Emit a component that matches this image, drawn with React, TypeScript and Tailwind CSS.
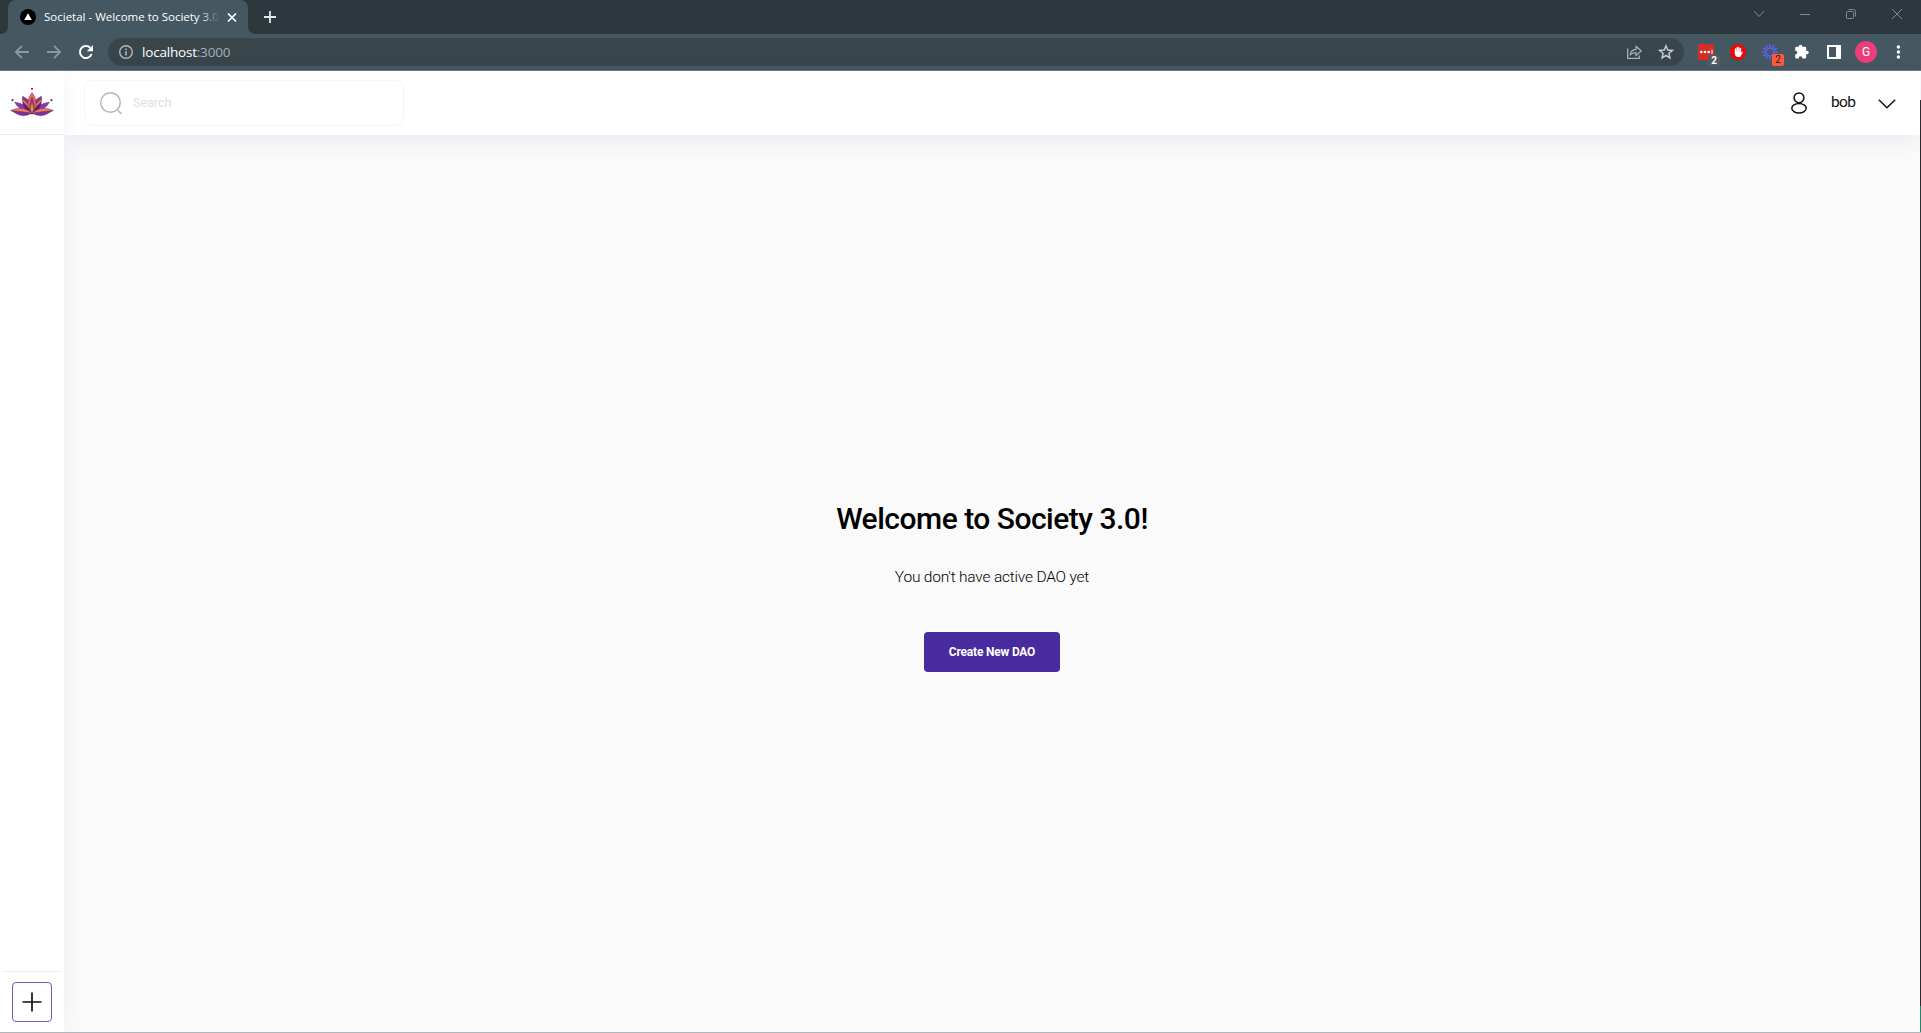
import React from "react";

type IconProps = { children: React.ReactNode; w?: number; h?: number; className?: string };

function Icon({ children, w = 16, h = 16, className = "" }: IconProps) {
  return (
    <svg width={w} height={h} viewBox={`0 0 ${w} ${h}`} fill="none" className={`shrink-0 ${className}`}>
      {children}
    </svg>
  );
}

function Slot({ children }: { children: React.ReactNode }) {
  return <div className="relative flex h-9 w-8 shrink-0 items-center justify-center">{children}</div>;
}

function WindowSlot({ children }: { children: React.ReactNode }) {
  return <div className="flex h-7 w-[46px] shrink-0 items-center justify-center text-[#7d8c92]">{children}</div>;
}

function TabStrip() {
  return (
    <div className="flex h-[34px] shrink-0 items-stretch bg-[#2c383e]">
      <Icon w={8} h={34}>
        <path d="M0 34 Q8 34 8 26 V34Z" fill="#455760" />
      </Icon>
      <div className="flex w-60 items-center rounded-t-lg bg-[#455760] pl-3">
        <Icon>
          <circle cx="8" cy="8" r="8" fill="#000" />
          <path d="M8 4.2 L11.8 11 H4.2Z" fill="#fff" />
        </Icon>
        <div className="relative ml-2 h-[18px] w-[176px] overflow-hidden whitespace-nowrap font-['Open_Sans',sans-serif] text-[11.5px] leading-[18px] text-white">
          Societal - Welcome to Society 3.0
          <div className="absolute inset-y-0 right-0 w-5 bg-linear-to-r from-[#455760]/0 to-[#455760]" />
        </div>
        <Icon className="ml-1">
          <path d="M4 4.5 L12 12.5 M12 4.5 L4 12.5" stroke="#fff" strokeWidth="1.7" />
        </Icon>
      </div>
      <Icon w={8} h={34}>
        <path d="M8 34 Q0 34 0 26 V34Z" fill="#455760" />
      </Icon>
      <Icon w={28} h={34}>
        <path d="M14 11 V23 M8 17 H20" stroke="#e3e7e8" strokeWidth="1.8" />
      </Icon>
      <div className="flex-1" />
      <div className="mr-px flex">
        <WindowSlot>
          <Icon>
            <path d="M3 5 L8 10.5 L13 5" stroke="currentColor" />
          </Icon>
        </WindowSlot>
        <WindowSlot>
          <Icon>
            <path d="M3 8.5 H13" stroke="currentColor" />
          </Icon>
        </WindowSlot>
        <WindowSlot>
          <Icon>
            <rect x="3.5" y="5.5" width="7" height="7" rx="1" stroke="currentColor" />
            <path d="M5.5 3.5 H10.5 Q12.5 3.5 12.5 5.5 V10.5" stroke="currentColor" />
          </Icon>
        </WindowSlot>
        <WindowSlot>
          <Icon>
            <path d="M3 3 L13 13 M13 3 L3 13" stroke="currentColor" />
          </Icon>
        </WindowSlot>
      </div>
    </div>
  );
}

function Toolbar() {
  return (
    <div className="flex h-[37px] shrink-0 items-start border-b border-[#6b7a82] bg-[#455760] pl-1.5 pr-[7px]">
      <Slot>
        <Icon>
          <path d="M15 8 H2 M8 1.8 L1.8 8 L8 14.2" stroke="#8c989e" strokeWidth="1.8" />
        </Icon>
      </Slot>
      <Slot>
        <Icon>
          <path d="M1 8 H14 M8 1.8 L14.2 8 L8 14.2" stroke="#8c989e" strokeWidth="1.8" />
        </Icon>
      </Slot>
      <Slot>
        <Icon>
          <path d="M13.6 10 A6 6 0 1 1 12.2 3.8" stroke="#fff" strokeWidth="2" />
          <path d="M15 1 V7.2 H8.8Z" fill="#fff" />
        </Icon>
      </Slot>
      <div className="ml-1.5 mr-1.5 mt-1 flex h-7 flex-1 items-center rounded-full bg-[#38454b] pl-2.5 pr-0.5">
        <Icon>
          <circle cx="8" cy="8" r="6.3" stroke="#b0b8bc" strokeWidth="1.4" />
          <path d="M8 7.2 V11.5 M8 4.4 V6" stroke="#b0b8bc" strokeWidth="1.6" />
        </Icon>
        <div className="ml-2 flex-1 whitespace-nowrap font-['Open_Sans',sans-serif] text-[13.5px] leading-5 tracking-[-0.2px] text-white">
          localhost<span className="text-[#a5aeb2]">:3000</span>
        </div>
        <Slot>
          <Icon>
            <path d="M1.7 4.5 V14.3 H13.3 V11.5" stroke="#aab2b6" strokeWidth="1.3" />
            <path d="M4.2 11 C4.6 7.4 6.8 5.6 10 5.4 V2.2 L15.2 7 L10 11.6 V8.6 C7.4 8.6 5.6 9.2 4.2 11Z" stroke="#aab2b6" strokeWidth="1.2" strokeLinejoin="round" />
          </Icon>
        </Slot>
        <Slot>
          <Icon>
            <path d="M8 1.8 L9.8 6 L14.3 6.4 L10.9 9.4 L11.9 13.9 L8 11.5 L4.1 13.9 L5.1 9.4 L1.7 6.4 L6.2 6Z" stroke="#c3c9cc" strokeWidth="1.5" />
          </Icon>
        </Slot>
      </div>
      <Slot>
        <Icon>
          <rect width="16" height="16" rx="1.5" fill="#d32d27" />
          <circle cx="3.3" cy="8" r="1.3" fill="#fff" />
          <circle cx="7" cy="8" r="1.3" fill="#fff" />
          <circle cx="10.7" cy="8" r="1.3" fill="#fff" />
          <path d="M14 5.5 V10" stroke="#fff" />
        </Icon>
        <div className="absolute left-[18px] top-[21px] flex h-[11px] w-3 items-center justify-center rounded-xs bg-[#565b5f] font-['Roboto',sans-serif] text-[10px] font-bold leading-none text-white">2</div>
      </Slot>
      <Slot>
        <Icon>
          <path d="M4.8 0 H11.2 L16 4.8 V11.2 L11.2 16 H4.8 L0 11.2 V4.8Z" fill="#e30b0b" />
          <path d="M5.5 9 V5 M7.2 8 V3.4 M8.9 8 V3.4 M10.5 9 V4.8" stroke="#fff" strokeWidth="1.4" strokeLinecap="round" />
          <path d="M4.8 7.5 H10 L11.2 8.8 L12.2 7.6 L12.8 8.5 L10.2 13 H7.2 Q4.8 12 4.8 9Z" fill="#fff" />
        </Icon>
      </Slot>
      <Slot>
        <Icon>
          <path
            d="M8 0 V5 M8 11 V16 M0 8 H5 M11 8 H16 M4 1.1 L6.5 5.4 M9.5 10.6 L12 14.9 M1.1 4 L5.4 6.5 M10.6 9.5 L14.9 12 M1.1 12 L5.4 9.5 M10.6 6.5 L14.9 4 M4 14.9 L6.5 10.6 M9.5 5.4 L12 1.1"
            stroke="#6160ee"
            strokeWidth="1.7"
          />
        </Icon>
        <div className="absolute left-[18px] top-5 flex h-3 w-3 items-center justify-center rounded-xs bg-[#ff5a3d] font-['Roboto',sans-serif] text-[10px] leading-none text-[#222]">2</div>
      </Slot>
      <Slot>
        <Icon>
          <path d="M1.2 4 Q1.2 2.8 2.4 2.8 H4.7 Q4.6 0.8 6.5 0.8 Q8.4 0.8 8.3 2.8 H11 Q12.2 2.8 12.2 4 V6.7 Q14.8 6.5 14.8 8.5 Q14.8 10.5 12.2 10.3 V13.2 Q12.2 14.5 11 14.5 H8.5 Q8.4 12.2 6.6 12.2 Q4.8 12.2 4.7 14.5 H2.4 Q1.2 14.5 1.2 13.2 V10.5 Q3.4 10.3 3.4 8.6 Q3.4 6.8 1.2 6.7Z" fill="#fff" />
        </Icon>
      </Slot>
      <Slot>
        <div className="h-3.5 w-3.5 border-y-2 border-l-2 border-r-[5px] border-white" />
      </Slot>
      <Slot>
        <div className="flex h-[22px] w-[22px] items-center justify-center rounded-full bg-[#ec3e7b] font-['Roboto',sans-serif] text-xs text-white">G</div>
      </Slot>
      <Slot>
        <Icon>
          <circle cx="8.4" cy="3" r="1.7" fill="#fff" />
          <circle cx="8.4" cy="8" r="1.7" fill="#fff" />
          <circle cx="8.4" cy="13" r="1.7" fill="#fff" />
        </Icon>
      </Slot>
    </div>
  );
}

function LotusLogo() {
  return (
    <Icon w={44} h={32}>
      <g stroke="#4a2348" strokeWidth="0.35" strokeLinejoin="round">
        <path d="M22 27 L13 18 L12.5 9 L20 14Z" fill="#8d2f8f" />
        <path d="M22 27 L31 18 L31.5 9 L24 14Z" fill="#8d2f8f" />
        <path d="M22 27 Q14 15 22 5.5 Q30 15 22 27Z" fill="#ee6a58" />
        <path d="M22 27 Q18 18 22 10 Q26 18 22 27Z" fill="#a03785" />
        <path d="M22 27 Q9 24 4.5 15 Q16 16 22 27Z" fill="#8a3aa5" />
        <path d="M22 27 Q35 24 39.5 15 Q28 16 22 27Z" fill="#8a3aa5" />
        <path d="M22 27 Q14 21 12 11.5 Q20 16 22 27Z" fill="#f0745c" />
        <path d="M22 27 Q30 21 32 11.5 Q24 16 22 27Z" fill="#f0745c" />
        <path d="M22 27 Q14 24 13 15.5 Q20 20 22 27Z" fill="#6e1d76" />
        <path d="M22 27 Q30 24 31 15.5 Q24 20 22 27Z" fill="#6e1d76" />
        <path d="M22 26 Q14 31 7 27 L0.8 23.5 Q12 20 22 26Z" fill="#7c3099" />
        <path d="M22 26 Q30 31 37 27 L43.2 23.5 Q32 20 22 26Z" fill="#7c3099" />
        <path d="M22 26 Q12 24.5 0.8 23.5 Q12 18 22 26Z" fill="#f27c5e" />
        <path d="M22 26 Q32 24.5 43.2 23.5 Q32 18 22 26Z" fill="#f27c5e" />
        <path d="M22 27 Q19 22 22 15 Q25 22 22 27Z" fill="#f39a58" />
      </g>
      <g fill="#75304f">
        <circle cx="22" cy="1.8" r="1.1" />
        <circle cx="2.5" cy="13.2" r="1.1" />
        <circle cx="41.5" cy="13.2" r="1.1" />
      </g>
    </Icon>
  );
}

function Sidebar() {
  return (
    <aside className="relative z-20 flex w-16 shrink-0 flex-col items-center bg-white shadow-[0_0_24px_rgba(70,50,160,0.06)] [clip-path:inset(0_-40px_0_0)]">
      <div className="flex h-16 w-16 shrink-0 justify-center border-b border-[#eeeef0] pt-4">
        <LotusLogo />
      </div>
      <div className="flex-1" />
      <div className="flex h-[61px] w-14 justify-center border-t border-[#ededed] pt-2.5">
        <button className="flex h-10 w-10 items-center justify-center rounded-sm border border-[#7059cf]">
          <Icon w={20} h={20}>
            <path d="M10 0.5 V19.5 M0.5 10 H19.5" stroke="#111" strokeWidth="1.7" />
          </Icon>
        </button>
      </div>
    </aside>
  );
}

function Header() {
  return (
    <header className="relative z-10 flex h-16 shrink-0 items-center bg-white pl-5 pr-6 shadow-[0_4px_22px_rgba(70,60,150,0.09)]">
      <div className="flex h-[46px] w-80 items-center rounded-lg border border-[#f4f4f5] pl-[15px]">
        <Icon w={22} h={22}>
          <circle cx="10.5" cy="10.5" r="9.8" stroke="#b3b3b3" strokeWidth="1.4" />
          <path d="M18 18.5 L21.5 22" stroke="#b3b3b3" strokeWidth="1.5" />
        </Icon>
        <span className="ml-[11px] font-['Roboto',sans-serif] text-[12.5px] leading-4 text-[#dedede]">Search</span>
      </div>
      <div className="flex-1" />
      <Icon w={16} h={22} className="-mt-px">
        <circle cx="8" cy="5.8" r="4.9" stroke="#111" strokeWidth="1.5" />
        <ellipse cx="8" cy="16.2" rx="7.2" ry="4.8" stroke="#111" strokeWidth="1.5" />
      </Icon>
      <span className="-mt-0.5 ml-6 w-[23px] font-['Roboto',sans-serif] text-[15.5px] leading-5 tracking-[-0.6px] text-[#111]">bob</span>
      <Icon w={18} h={10} className="ml-6 mt-0.5">
        <path d="M0.8 0.8 L9 8.8 L17.2 0.8" stroke="#111" strokeWidth="1.5" />
      </Icon>
    </header>
  );
}

export default function App() {
  return (
    <div className="flex h-[1033px] w-[1921px] flex-col overflow-hidden border-b border-[#b0b5bd] bg-white">
      <TabStrip />
      <Toolbar />
      <div className="flex min-h-0 flex-1">
        <Sidebar />
        <div className="flex flex-1 flex-col">
          <Header />
          <main className="flex flex-1 flex-col items-center bg-[#fafafa] pt-[364px] font-['Roboto',sans-serif] text-black">
            <h1 className="whitespace-nowrap text-[30px] font-medium leading-10 tracking-[-0.5px]">Welcome to Society 3.0!</h1>
            <p className="mt-[26px] whitespace-nowrap text-[15.5px] font-light leading-6 tracking-[-0.2px]">You don't have active DAO yet</p>
            <button className="mt-[43px] h-10 w-[136px] whitespace-nowrap rounded-sm bg-[#482b9e] text-xs font-bold tracking-[-0.2px] text-white">
              Create New DAO
            </button>
          </main>
        </div>
        <div className="flex w-px shrink-0 flex-col">
          <div className="h-[29px]" />
          <div className="flex-1 bg-[#2b2b2d]" />
          <div className="h-[26px] bg-[#1f8a68]" />
        </div>
      </div>
    </div>
  );
}
